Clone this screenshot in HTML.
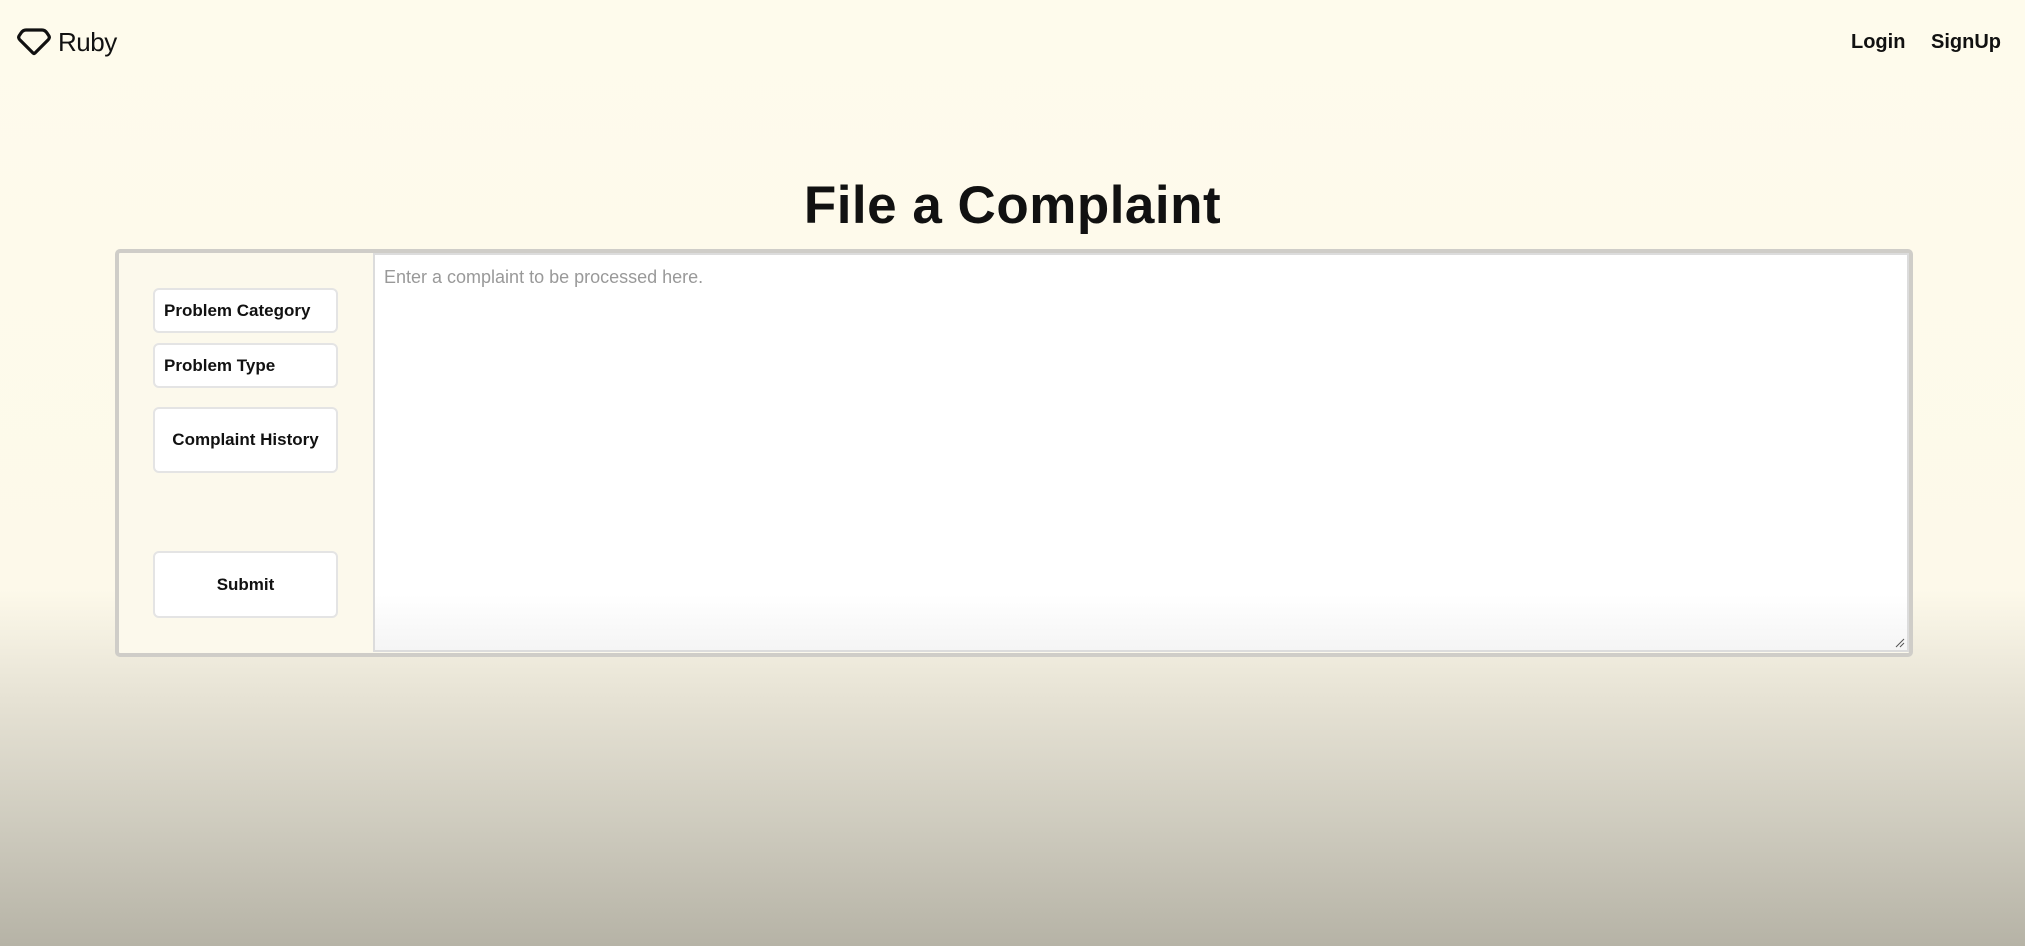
<!DOCTYPE html>
<html><head><style>
*{box-sizing:border-box;margin:0;padding:0}
body{width:2025px;height:946px;overflow:hidden;font-family:"Liberation Sans",sans-serif;color:#111;
background:linear-gradient(to bottom,#fefbec 0px,#fdf9ea 590px,#e6e2d4 700px,#cfccbf 820px,#b6b3a6 946px);position:relative}
.abs{position:absolute}
.btn{position:absolute;left:153px;width:185px;background:#fff;border:2px solid #e4e4e4;border-radius:6px;font-weight:bold;font-size:17px;display:flex;align-items:center}
</style></head><body>
<svg class="abs" style="left:16px;top:27px" width="36" height="30" viewBox="0 0 36 30"><path d="M10 3 H26 Q29 3 31 6 L33 9 Q34 11 32 13 L19 26 Q18 27 17 26 L4 13 Q2 11 3 9 L5 6 Q7 3 10 3 Z" fill="none" stroke="#111" stroke-width="3.2" stroke-linejoin="round"/></svg>
<div class="abs" style="left:58px;top:27px;font-size:26px;letter-spacing:-0.5px">Ruby</div>
<div class="abs" style="left:1851px;top:31px;font-size:20px;font-weight:bold">Login</div>
<div class="abs" style="left:1931px;top:31px;font-size:20px;font-weight:bold">SignUp</div>
<div class="abs" style="left:0;width:2025px;top:175px;text-align:center;font-size:53px;font-weight:bold;letter-spacing:0.5px">File a Complaint</div>
<div class="abs" style="left:115px;top:249px;width:1798px;height:408px;border:4px solid #cfcdc8;border-radius:5px;background:#fcf9ec"></div>
<div class="abs" style="left:373px;top:253px;width:1536px;height:399px;border:2px solid #dcdcdc;background:linear-gradient(to bottom,#fff 0,#fff 340px,#f4f4f4 399px)">
<div style="position:absolute;left:9px;top:12px;font-size:18px;color:#999">Enter a complaint to be processed here.</div>
<svg style="position:absolute;right:2px;bottom:2px" width="10" height="10"><path d="M1 9 L9 1 M5 9 L9 5" stroke="#555" stroke-width="1"/></svg>
</div>
<div class="btn" style="top:288px;height:45px;padding-left:9px">Problem Category</div>
<div class="btn" style="top:343px;height:45px;padding-left:9px">Problem Type</div>
<div class="btn" style="top:407px;height:66px;justify-content:center">Complaint History</div>
<div class="btn" style="top:551px;height:67px;justify-content:center">Submit</div>
</body></html>
